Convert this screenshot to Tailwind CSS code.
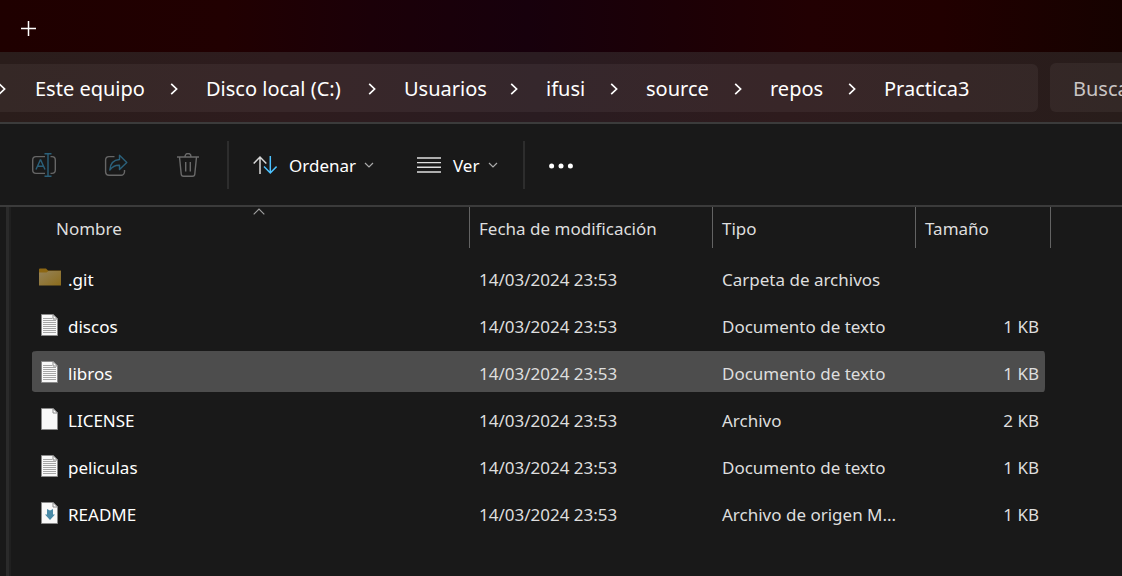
<!DOCTYPE html>
<html lang="es">
<head>
<meta charset="utf-8">
<meta name="viewport" content="width=device-width, initial-scale=1">
<title>Practica3</title>
<script src="https://cdn.jsdelivr.net/npm/@tailwindcss/browser@4"></script>
</head>
<body class="bg-[#191919] text-white font-['Noto_Sans','Open_Sans',sans-serif] text-[17px] leading-6 min-h-screen flex flex-col overflow-x-hidden">

<!-- Shared icons -->
<svg class="hidden" aria-hidden="true">
  <symbol id="chevron" viewBox="0 0 8 12"><path d="M1.2 .8 6.6 6 1.2 11.2" fill="none" stroke="currentColor" stroke-width="1.7"/></symbol>
  <symbol id="caret" viewBox="0 0 10 6"><path d="M1 1l4 4 4-4" fill="none" stroke="currentColor" stroke-width="1.2"/></symbol>
  <symbol id="doc" viewBox="0 0 17 22">
    <path d="M.5.5H12L16.500 5v16.500H.5z" fill="#f9f9f9" stroke="#8a8a8a"/>
    <path d="M12 .5v4.500h4.500z" fill="#fff" stroke="#8a8a8a"/>
  </symbol>
  <symbol id="text-doc" viewBox="0 0 17 22">
    <use href="#doc"/>
    <path d="M2 4.500h9M2 6.500h13M2 8.500h13M2 10.500h13M2 12.500h13M2 14.500h13M2 16.500h13M2 18.500h13" stroke="#a6a6a6" fill="none"/>
  </symbol>
</svg>

<header class="h-[52px] flex items-center pl-[14px] pt-1 bg-[linear-gradient(90deg,#1f0000_0%,#210001_20%,#1b0008_33%,#17000c_47%,#1c0006_60%,#220002_72%,#210000_84%,#160200_100%)]">
  <button type="button" aria-label="Agregar nueva pestaña" class="size-7 grid place-items-center">
    <svg class="size-[15px]" viewBox="0 0 15 15"><path d="M7.500 0v15M0 7.500h15" stroke="#fff" stroke-width="1.500"/></svg>
  </button>
</header>

<div class="h-[72px] flex items-end gap-3 pb-[10px] border-b-2 border-[#3b3b3b] bg-[linear-gradient(90deg,#2a1d1b_0%,#2e1c1e_25%,#2a1c21_48%,#2e1b1d_70%,#281d1b_100%)]">
  <nav aria-label="Ruta de acceso" class="h-12 flex-1 rounded-r-md bg-white/5">
    <ol class="h-full flex items-center pt-[2px] text-[20px] whitespace-nowrap">
      <li class="w-[35px] flex"><svg class="w-2 h-3 -ml-[2px]"><use href="#chevron"/></svg></li>
      <li class="w-[171px] flex items-center"><a href="#" class="w-[135px]">Este equipo</a><svg class="w-2 h-3"><use href="#chevron"/></svg></li>
      <li class="w-[198px] flex items-center"><a href="#" class="w-[162px]">Disco local (C:)</a><svg class="w-2 h-3"><use href="#chevron"/></svg></li>
      <li class="w-[142px] flex items-center"><a href="#" class="w-[106px]">Usuarios</a><svg class="w-2 h-3"><use href="#chevron"/></svg></li>
      <li class="w-[100px] flex items-center"><a href="#" class="w-16">ifusi</a><svg class="w-2 h-3"><use href="#chevron"/></svg></li>
      <li class="w-[124px] flex items-center"><a href="#" class="w-[88px]">source</a><svg class="w-2 h-3"><use href="#chevron"/></svg></li>
      <li class="w-[114px] flex items-center"><a href="#" class="w-[78px]">repos</a><svg class="w-2 h-3"><use href="#chevron"/></svg></li>
      <li><a href="#">Practica3</a></li>
    </ol>
  </nav>
  <input type="text" role="searchbox" aria-label="Buscar en Practica3" placeholder="Buscar en Practica3" class="h-[49px] w-[72px] pl-[23px] pt-[2px] rounded-l-md bg-white/5 text-[20px] placeholder:text-[#c9c5c4] outline-none">
</div>

<div role="toolbar" aria-label="Comandos" class="h-[83px] flex items-center border-b-2 border-[#3b3b3b] pl-6">
  <div class="flex items-center gap-8">
    <button type="button" disabled aria-label="Cambiar nombre" class="size-10 grid place-items-center">
      <svg class="w-6 h-6" viewBox="0 0 24 24" fill="none" stroke-width="1.400">
        <path d="M13 3.600H4A3.400 3.400 0 0 0 .7 7v10A3.400 3.400 0 0 0 4 20.400h9M18.500 3.600H20A3.400 3.400 0 0 1 23.300 7v10a3.400 3.400 0 0 1-3.300 3.400h-1.500" stroke="#666"/>
        <path d="M12.500.7h7M12.500 23.300h7M16 .7v22.600M4 16.500 8.300 7h.4l4.300 9.500M5.500 13.300h6" stroke="#2b607a"/>
      </svg>
    </button>
    <button type="button" disabled aria-label="Compartir" class="size-10 grid place-items-center">
      <svg class="w-6 h-6" viewBox="0 0 24 24" fill="none" stroke-width="1.400" stroke-linejoin="round">
        <path d="M10.500 3.600H5A3.500 3.500 0 0 0 1.600 7v12A3.500 3.500 0 0 0 5 22.300h12a3.500 3.500 0 0 0 3.500-3.500V17" stroke="#666"/>
        <path d="M15.500 2.300 22.800 9.500l-7.300 7v-4.200c-4.200-.2-7.200 1.200-9.700 4.800.4-6.500 4-10.200 9.700-10.600z" stroke="#2b607a"/>
      </svg>
    </button>
    <button type="button" disabled aria-label="Eliminar" class="size-10 grid place-items-center">
      <svg class="w-6 h-6" viewBox="0 0 24 24" fill="none" stroke="#6a6a6a" stroke-width="1.400">
        <path d="M1 4h22M9 3.500a3 3 0 0 1 6 0M3.500 4l1.700 17a2.400 2.400 0 0 0 2.400 2.300h8.800a2.400 2.400 0 0 0 2.400-2.300L20.500 4M9.700 9v9.500M14.300 9v9.500"/>
      </svg>
    </button>
  </div>
  <div class="w-[2px] h-12 bg-[#2d2d2d] ml-[19px]"></div>
  <button type="button" class="ml-6 h-10 flex items-center">
    <svg class="w-6 h-5" viewBox="0 0 24 20" fill="none" stroke-width="1.500">
      <path d="M7 19V2M.7 8.500 7 2l6.300 6.500" stroke="#d8d8d8"/>
      <path d="M17.300 1v17M11 11.500l6.300 6.500 6.300-6.500" stroke="#4cc2ff"/>
    </svg>
    <span class="w-[66px] ml-3 pt-[2px]">Ordenar</span>
    <svg class="ml-[9px] w-[10px] h-[6px] text-[#aaa]"><use href="#caret"/></svg>
  </button>
  <button type="button" class="ml-[43px] h-10 flex items-center">
    <svg class="w-6 h-4" viewBox="0 0 24 16"><path d="M0 1h24M0 5.600h24M0 10.300h24M0 15h24" stroke="#dedede" stroke-width="1.400"/></svg>
    <span class="w-[26px] ml-3 pt-[2px]">Ver</span>
    <svg class="ml-[9px] w-[10px] h-[6px] text-[#aaa]"><use href="#caret"/></svg>
  </button>
  <div class="w-[2px] h-12 bg-[#2d2d2d] ml-[25px]"></div>
  <button type="button" aria-label="Ver más" class="ml-[18px] pt-[2px] h-10 w-9 grid place-items-center">
    <svg class="w-6 h-[6px]" viewBox="0 0 24 6" fill="#fff"><circle cx="2.600" cy="3" r="2.500"/><circle cx="12" cy="3" r="2.500"/><circle cx="21.400" cy="3" r="2.500"/></svg>
  </button>
</div>

<main class="flex-1 flex">
  <div class="w-[6px] shrink-0"></div>
  <div class="w-[5px] shrink-0 bg-[#202020] border-l-[3px] border-[#2b2b2b]"></div>
  <div class="flex-1 pl-[21px]">
    <table class="table-fixed w-[1019px] border-separate border-spacing-0 text-left text-[#dedede]">
      <colgroup><col class="w-[438px]"><col class="w-[243px]"><col class="w-[203px]"><col class="w-[135px]"></colgroup>
      <thead>
        <tr class="h-[47px] align-top [&_button]:w-full [&_button]:h-[41px] [&_button]:pt-[2px] [&_button]:text-left [&_button]:border-r [&_button]:border-[#636363]">
          <th scope="col" aria-sort="ascending" class="p-0 font-normal">
            <button type="button" class="relative pl-6">Nombre
              <svg class="absolute left-[221px] top-[1px] w-3 h-[7px]" viewBox="0 0 12 7"><path d="M.7 6.300 6 1l5.300 5.300" fill="none" stroke="#a0a0a0" stroke-width="1.100"/></svg>
            </button>
          </th>
          <th scope="col" class="p-0 font-normal"><button type="button" class="pl-[9px]">Fecha de modificación</button></th>
          <th scope="col" class="p-0 font-normal"><button type="button" class="pl-[9px]">Tipo</button></th>
          <th scope="col" class="p-0 font-normal"><button type="button" class="pl-[9px]">Tamaño</button></th>
        </tr>
      </thead>
      <tbody class="[&_td]:h-[47px] [&_td]:border-y-[3px] [&_td]:border-transparent [&_td]:bg-clip-padding [&_td]:pt-1 [&_td]:pb-0 [&_td]:pr-0 [&_td]:pl-[9px] [&_td:first-child]:pl-[7px] [&_td:first-child]:pt-0 [&_td:first-child]:text-white [&_td:first-child]:rounded-l-[5px] [&_td:last-child]:border-r-[6px] [&_td:last-child]:pr-[6px] [&_td:last-child]:text-right [&_td:last-child]:rounded-r-[8px] [&_span]:pt-1">
        <tr>
          <td><div class="flex items-center">
            <svg class="w-[22px] h-[22px] mr-[7px]" viewBox="0 0 22 22">
              <defs><linearGradient id="folder" x1="0" y1="0" x2="1" y2="1"><stop offset="0" stop-color="#95835a"/><stop offset="1" stop-color="#8c6c1b"/></linearGradient></defs>
              <path d="M0 2.500q0-1 1-1h6L9 3.500h13v5H0z" fill="#8d6713"/><path d="M0 5.500h7.500L9.500 4H22v14.500H0z" fill="url(#folder)"/>
            </svg><span>.git</span></div></td>
          <td>14/03/2024 23:53</td><td>Carpeta de archivos</td><td></td>
        </tr>
        <tr>
          <td><div class="flex items-center"><svg class="w-[17px] h-[22px] ml-[2px] mr-[10px]"><use href="#text-doc"/></svg><span>discos</span></div></td>
          <td>14/03/2024 23:53</td><td>Documento de texto</td><td>1 KB</td>
        </tr>
        <tr class="[&>td]:bg-[#4d4d4d]">
          <td><div class="flex items-center"><svg class="w-[17px] h-[22px] ml-[2px] mr-[10px]"><use href="#text-doc"/></svg><span>libros</span></div></td>
          <td>14/03/2024 23:53</td><td>Documento de texto</td><td>1 KB</td>
        </tr>
        <tr>
          <td><div class="flex items-center"><svg class="w-[17px] h-[22px] ml-[2px] mr-[10px]"><use href="#doc"/></svg><span>LICENSE</span></div></td>
          <td>14/03/2024 23:53</td><td>Archivo</td><td>2 KB</td>
        </tr>
        <tr>
          <td><div class="flex items-center"><svg class="w-[17px] h-[22px] ml-[2px] mr-[10px]"><use href="#text-doc"/></svg><span>peliculas</span></div></td>
          <td>14/03/2024 23:53</td><td>Documento de texto</td><td>1 KB</td>
        </tr>
        <tr>
          <td><div class="flex items-center"><svg class="w-[17px] h-[22px] ml-[2px] mr-[10px]" viewBox="0 0 17 22"><use href="#doc"/><path d="M6 7l3 1.500L12 7v5.500h2L9 18l-5-5.500h2z" fill="#4a8ba8"/></svg><span>README</span></div></td>
          <td>14/03/2024 23:53</td><td>Archivo de origen M...</td><td>1 KB</td>
        </tr>
      </tbody>
    </table>
  </div>
</main>
</body>
</html>
